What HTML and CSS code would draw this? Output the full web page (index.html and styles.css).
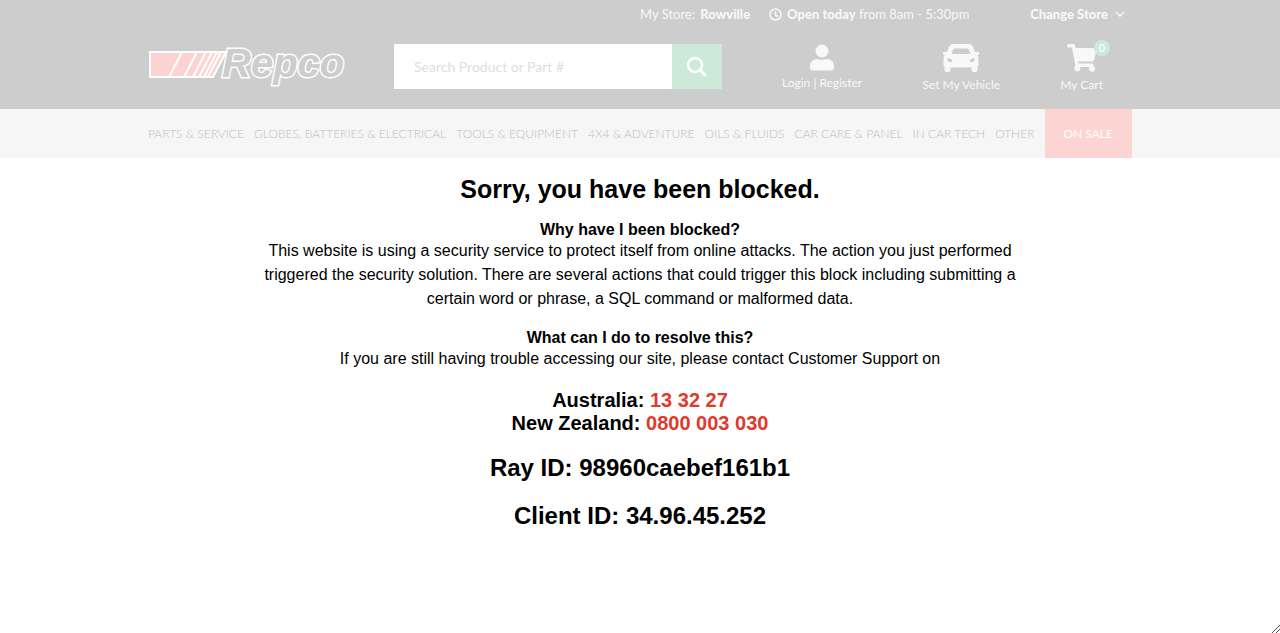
FILE: index.html
```
<!DOCTYPE html>
<html lang="en">
<head>
  <meta charset="utf-8">
  <title>Repco - Blocked</title>
  <link rel="stylesheet" href="styles.css">
</head>
<body>
  <header class="header">
    <div class="container">
      <div class="store-bar">
        <span class="store">My Store: <strong>Rowville</strong></span>
        <span class="hours">
          <svg width="13" height="13" viewBox="0 0 26 26" fill="none" stroke="currentColor" stroke-width="3"><circle cx="13" cy="13" r="11"/><path d="M13 6v8l5 3"/></svg>
          <span><strong>Open today</strong> from 8am - 5:30pm</span>
        </span>
        <a href="#" class="change-store">Change Store
          <svg width="10" height="6" viewBox="0 0 20 12" fill="none" stroke="currentColor" stroke-width="3"><path d="M2 2l8 8 8-8"/></svg>
        </a>
      </div>
      <div class="header-main">
        <a href="#" class="logo">
          <svg width="210" height="48" viewBox="0 0 210 48" role="img" aria-label="Repco">
            <path class="logo-flag" d="M2 12H78L65 37H2Z"/>
            <g class="logo-lines">
              <path d="M34 12L21 37"/>
              <path d="M49 12L36 37"/>
              <path d="M58 12L45 37"/>
              <path d="M64 12L51 37"/>
              <path d="M69 12L56 37"/>
              <path d="M73 12L60 37"/>
            </g>
            <text class="logo-text" x="74" y="37">Repco</text>
          </svg>
        </a>
        <form class="search">
          <input type="text" class="search-input" placeholder="Search Product or Part #" aria-label="Search Product or Part #">
          <button type="submit" class="search-btn" aria-label="Search">
            <svg width="22" height="22" viewBox="0 0 22 22" fill="none" stroke="currentColor" stroke-width="2.500"><circle cx="9" cy="9" r="7"/><path d="M14 14l6 6" stroke-width="3"/></svg>
          </button>
        </form>
        <nav class="account">
          <a href="#" class="account-link">
            <svg width="24" height="27" viewBox="0 0 24 27" fill="currentColor"><circle cx="12" cy="7" r="6.500"/><path d="M7 15c2 1 8 1 10 0 4 0 7 3 7 7v2c0 1.500-1 2.500-2.500 2.500h-19C1 26.500 0 25.500 0 24v-2c0-4 3-7 7-7z"/></svg>
            <span>Login | Register</span>
          </a>
          <a href="#" class="account-link vehicle">
            <svg width="36" height="28" viewBox="0 0 36 28" fill="currentColor" fill-rule="evenodd"><path d="M11 0h14c3 0 4 1 5 3l2 5h3q1 0 1 1v1q0 1-1 1h-1c1 1 1.500 2 1.500 4v6q0 1-1 2v3q0 2-2 2h-2q-2 0-2-2v-2.500H7.500V26q0 2-2 2h-2q-2 0-2-2v-3q-1-1-1-2v-6c0-2 .5-3 1.500-4H1q-1 0-1-1V9q0-1 1-1h3l2-5c1-2 2-3 5-3zM12 4.500q-1.500 0-2 1.500l-1.500 4h19L26 6q-.5-1.500-2-1.500zM5 14c-1.500 2 0 4 2.500 4 2 0 2.500-1 1.500-2s-2.500-2-4-2zM31 14c1.500 2 0 4-2.500 4-2 0-2.500-1-1.500-2s2.500-2 4-2z"/></svg>
            <span>Set My Vehicle</span>
          </a>
          <a href="#" class="account-link cart">
            <svg width="30" height="28" viewBox="0 0 30 28" fill="currentColor"><path d="M1.500 0h5q1 0 1.500 1l.5 3H28q2 0 1.500 2L27 16q-.5 1.500-2 1.500H11l.5 2H25q1.500 0 1.500 1.500v1a3 3 0 1 1-4 1H13a3 3 0 1 1-4.500-1L5 3.500H1.500Q0 3.500 0 2T1.500 0z"/></svg>
            <span class="badge">0</span>
            <span>My Cart</span>
          </a>
        </nav>
      </div>
    </div>
  </header>

  <nav class="menu">
    <div class="container menu-list">
      <a href="#">PARTS &amp; SERVICE</a>
      <a href="#">GLOBES, BATTERIES &amp; ELECTRICAL</a>
      <a href="#">TOOLS &amp; EQUIPMENT</a>
      <a href="#">4X4 &amp; ADVENTURE</a>
      <a href="#">OILS &amp; FLUIDS</a>
      <a href="#">CAR CARE &amp; PANEL</a>
      <a href="#">IN CAR TECH</a>
      <a href="#">OTHER</a>
      <a href="#" class="sale">ON SALE</a>
    </div>
  </nav>

  <main class="content">
    <h1>Sorry, you have been blocked.</h1>
    <h2>Why have I been blocked?</h2>
    <p>This website is using a security service to protect itself from online attacks. The action you just performed triggered the security solution. There are several actions that could trigger this block including submitting a certain word or phrase, a SQL command or malformed data.</p>
    <h2>What can I do to resolve this?</h2>
    <p>If you are still having trouble accessing our site, please contact Customer Support on</p>
    <div class="phones">
      <div>Australia: <a href="tel:133227">13 32 27</a></div>
      <div>New Zealand: <a href="tel:0800003030">0800 003 030</a></div>
    </div>
    <div class="ids">
      <div>Ray ID: 98960caebef161b1</div>
      <div>Client ID: 34.96.45.252</div>
    </div>
  </main>

  <!-- resize grip -->
  <svg class="grip" width="8" height="8" viewBox="0 0 8 8" fill="none" stroke="#555"><path d="M0 8L8 0M4 8l4-4"/></svg>
</body>
</html>
```
FILE: styles.css
```
* {
  box-sizing: border-box;
}
body {
  margin: 0;
  background: #fff;
  color: #000;
  font-family: "Liberation Sans", Arial, sans-serif;
  font-size: 16px;
}
a {
  color: inherit;
  text-decoration: none;
}
svg {
  display: block;
}
.container {
  max-width: 984px;
  margin: 0 auto;
}

/* header */
.header {
  background: #cdcdcd;
  color: #f7f8f9;
  font-family: Lato, sans-serif;
  padding-bottom: 20px;
}
.store-bar {
  display: flex;
  align-items: center;
  height: 28px;
  padding: 0 7px 0 50%;
  font-size: 13px;
  white-space: nowrap;
}
.store-bar strong,
.change-store {
  font-weight: 900;
}
.store strong {
  margin-left: 2px;
}
.hours {
  display: flex;
  align-items: center;
  gap: 5px;
  margin-left: 19px;
}
.change-store {
  display: flex;
  align-items: center;
  gap: 7px;
  margin-left: auto;
}
.header-main {
  display: grid;
  grid-template-columns: 3fr 4fr 5fr;
  height: 61px;
  padding-top: 12px;
}
.logo-flag {
  fill: #fcd3d0;
  stroke: #fff;
  stroke-width: 2;
}
.logo-lines {
  stroke: #fff;
  stroke-width: 2;
}
.logo-text {
  font: italic bold 40px "Liberation Sans", Arial, sans-serif;
  fill: #cdcdcd;
  stroke: #fff;
  stroke-width: 3;
  paint-order: stroke;
}
.search {
  display: flex;
  height: 45px;
  margin: 4px 0 0;
}
.search-input {
  flex: 1;
  min-width: 0;
  border: 0;
  padding: 0 20px;
  background: #fff;
  font-family: Lato, sans-serif;
  font-size: 14px;
}
.search-input::placeholder {
  color: #dedee0;
}
.search-btn {
  display: flex;
  align-items: center;
  justify-content: center;
  width: 50px;
  padding: 0;
  border: 0;
  background: #cce9da;
  color: #fff;
}
.account {
  display: flex;
  justify-content: space-between;
  padding: 4px 29px 0 60px;
  font-size: 12px;
  line-height: 16px;
  white-space: nowrap;
}
.account-link {
  position: relative;
  display: flex;
  flex-direction: column;
  align-items: center;
  gap: 4px;
}
.account-link.vehicle,
.account-link.cart {
  gap: 5px;
}
.badge {
  position: absolute;
  top: -4px;
  right: -7px;
  width: 16px;
  height: 16px;
  border-radius: 50%;
  background: #cce9da;
  font-size: 11px;
  font-weight: bold;
  text-align: center;
}

/* menu */
.menu {
  background: #f6f6f6;
  color: #bebebe;
  font-family: Lato, sans-serif;
  font-size: 12px;
  font-weight: 300;
}
.menu-list {
  display: flex;
  align-items: center;
  justify-content: space-between;
  height: 49px;
  white-space: nowrap;
}
.menu .sale {
  padding: 0 19px;
  background: #fcd5d2;
  color: #fff;
  font-weight: 400;
  line-height: 49px;
}

/* message */
.content {
  max-width: 768px;
  margin: 0 auto;
  padding-top: 16px;
  text-align: center;
}
h1 {
  margin: 0 0 17px;
  font-size: 25px;
  line-height: 30px;
}
h2 {
  margin: 0;
  font-size: 16px;
  line-height: 18px;
}
p {
  margin: 0 0 18px;
  line-height: 24px;
}
.phones {
  font-size: 20px;
  font-weight: bold;
  line-height: 23px;
}
.phones a {
  color: #e03a2c;
}
.ids {
  display: grid;
  gap: 20px;
  margin-top: 19px;
  font-size: 24px;
  font-weight: bold;
  line-height: 28px;
}
.grip {
  position: fixed;
  right: 0;
  bottom: 0;
}
```
